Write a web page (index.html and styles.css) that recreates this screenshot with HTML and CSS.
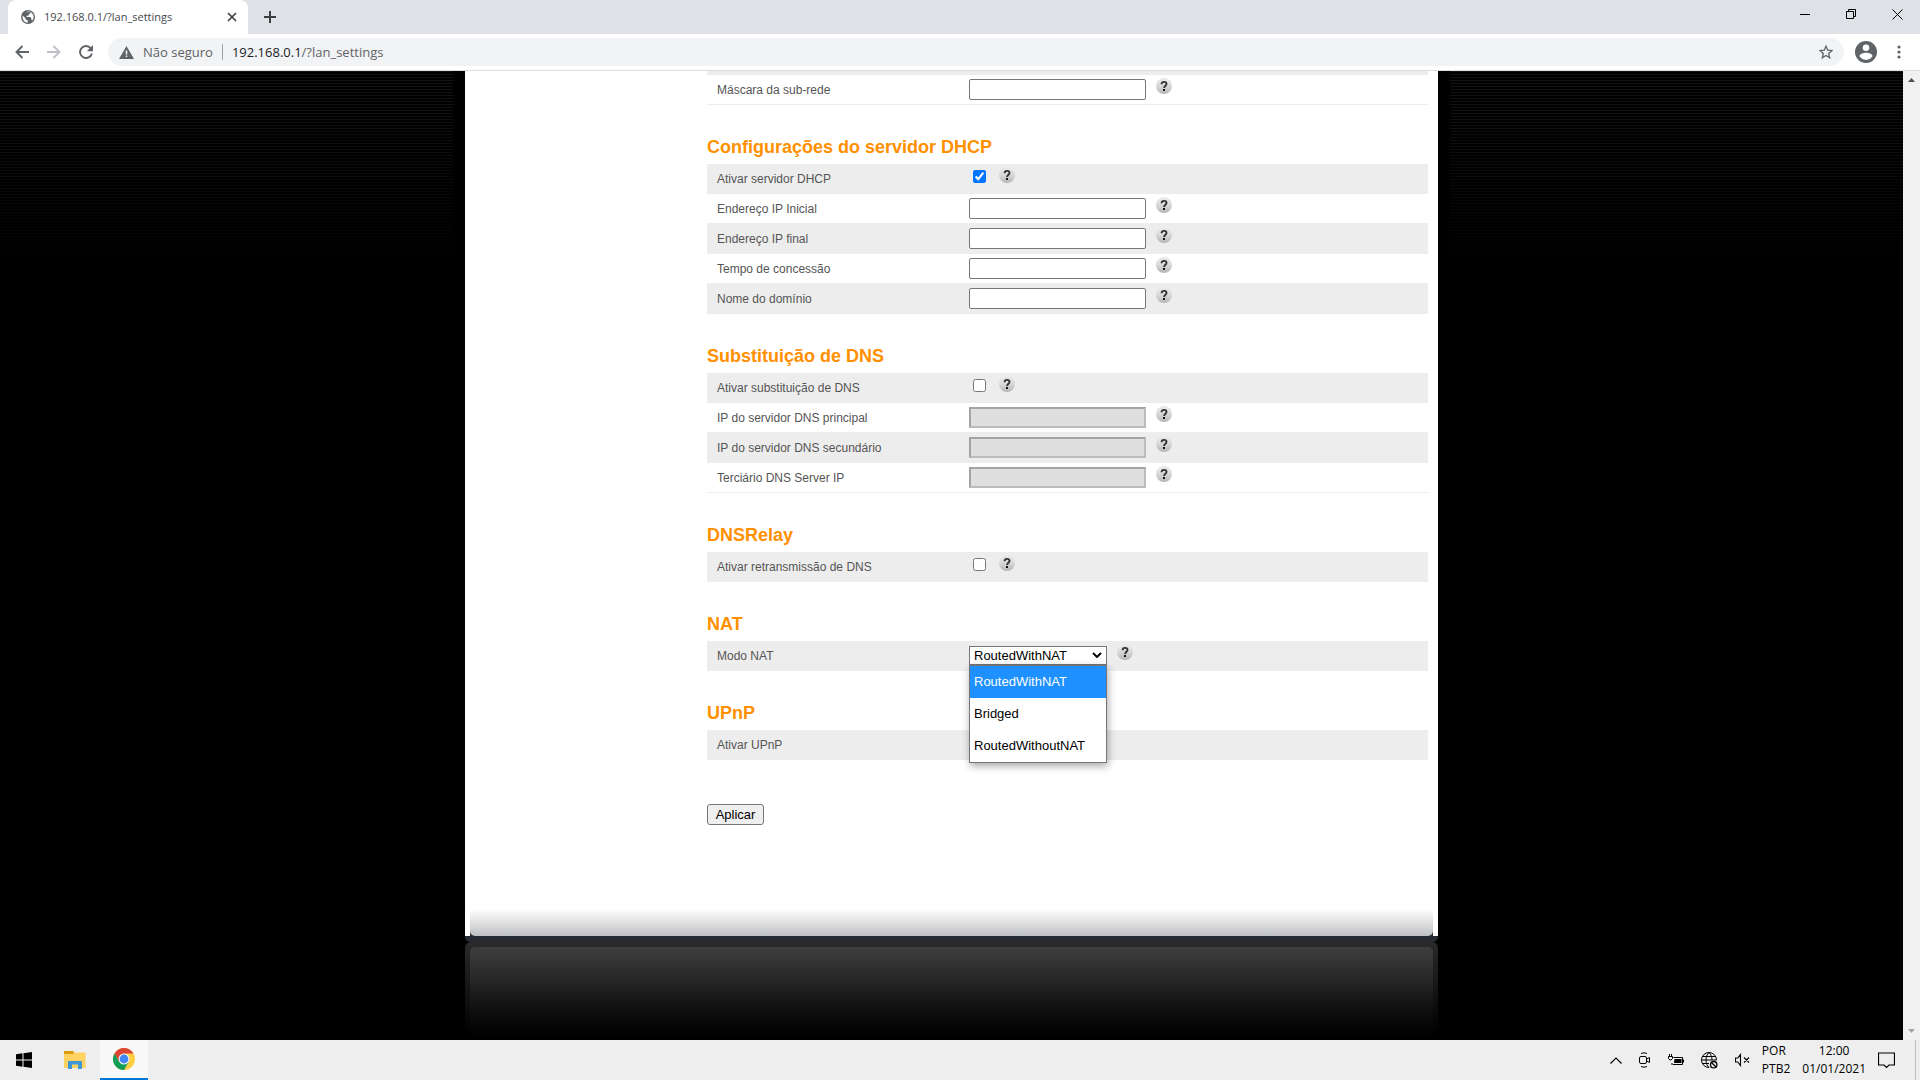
FILE: index.html
```html
<!DOCTYPE html>
<html lang="pt-BR">
<head>
<meta charset="utf-8">
<title>192.168.0.1/?lan_settings</title>
<link rel="stylesheet" href="styles.css">
</head>
<body>
<svg class="defs" aria-hidden="true">
  <defs>
    <linearGradient id="ball" x1="0" y1="0" x2="0" y2="1"><stop offset="0" stop-color="#ececec"/><stop offset=".5" stop-color="#d9d9d9"/><stop offset="1" stop-color="#b4b4b4"/></linearGradient>
    <symbol id="help" viewBox="0 0 16 16"><circle cx="8" cy="8" r="8" fill="url(#ball)"/><path d="M5.600 6.300C5.600 4.700 6.600 3.900 8.100 3.900S10.500 4.700 10.500 5.900C10.500 7.700 8.100 7.700 8.100 10" fill="none" stroke="#333" stroke-width="1.900"/><rect x="7" y="11" width="2" height="2" fill="#111"/></symbol>
  </defs>
</svg>

<header class="tabs">
  <div class="tab">
    <svg class="favicon" viewBox="0 0 14 14"><circle cx="7" cy="7" r="7" fill="#5f6368"/><path d="M1.600 5.500 4.500 8.200v1.200l2.300 1v2.200C3.500 12.700 1 9.500 1.600 5.500ZM5 2.200c1.300-.8 3-.9 4.300-.3v1.600L7.600 4.600v1.200H5.600v1.300h3.700l1 1.200v1.500l1.200.7C13.600 7.500 12.700 4 9.800 2.300L8.500 2Z" fill="#fff"/></svg>
    <span class="tab-title">192.168.0.1/?lan_settings</span>
    <button class="icon-btn" aria-label="Fechar guia"><svg width="10" height="10" viewBox="0 0 10 10"><path d="M1 1l8 8M9 1 1 9" stroke="#3c4043" stroke-width="1.700"/></svg></button>
  </div>
  <button class="icon-btn new-tab" aria-label="Nova guia"><svg width="12" height="12" viewBox="0 0 12 12"><path d="M6 0v12M0 6h12" stroke="#3c4043" stroke-width="2"/></svg></button>
  <div class="window-controls">
    <button class="icon-btn" aria-label="Minimizar"><svg width="10" height="10" viewBox="0 0 10 10"><path d="M0 5.500h10" stroke="#000"/></svg></button>
    <button class="icon-btn" aria-label="Restaurar"><svg width="10" height="10" viewBox="0 0 10 10"><path d="M.5 2.500h7v7h-7ZM2.500 2.500v-2h7v7h-2" fill="none" stroke="#000"/></svg></button>
    <button class="icon-btn" aria-label="Fechar"><svg width="11" height="11" viewBox="0 0 11 11"><path d="M.5.5l10 10M10.500.5l-10 10" stroke="#000"/></svg></button>
  </div>
</header>

<nav class="toolbar">
  <button class="icon-btn nav-btn" aria-label="Voltar"><svg width="14" height="14" viewBox="0 0 14 14"><path d="M14 7H1.500M7.500 1l-6 6 6 6" fill="none" stroke="#5f6368" stroke-width="1.900"/></svg></button>
  <button class="icon-btn nav-btn" aria-label="Avançar"><svg width="14" height="14" viewBox="0 0 14 14"><path d="M0 7h12.500M6.500 1l6 6-6 6" fill="none" stroke="#bdc1c6" stroke-width="1.900"/></svg></button>
  <button class="icon-btn nav-btn" aria-label="Recarregar"><svg width="14" height="14" viewBox="0 0 14 14"><path d="M11.700 3.200A6 6 0 1 0 12.900 8.500" fill="none" stroke="#5f6368" stroke-width="1.900"/><path d="M14 0v6.200H7.800Z" fill="#5f6368"/></svg></button>
  <div class="omnibox">
    <svg width="15" height="13" viewBox="0 0 15 13"><path d="M7.500 0 15 13H0Z" fill="#5f6368"/><path d="M6.700 4.500h1.600v4H6.700ZM6.700 9.500h1.600v1.600H6.700Z" fill="#f1f3f4"/></svg>
    <span class="insecure">Não seguro</span>
    <span class="divider"></span>
    <span class="url">192.168.0.1<span class="path">/?lan_settings</span></span>
    <button class="icon-btn star" aria-label="Favoritar"><svg width="14" height="14" viewBox="0 0 14 14"><path d="M7 1.200 8.700 5.200l4.300.4-3.300 2.900 1 4.300L7 10.500l-3.700 2.300 1-4.300L1 5.600l4.300-.4Z" fill="none" stroke="#5f6368" stroke-width="1.300"/></svg></button>
  </div>
  <button class="icon-btn profile" aria-label="Perfil"><svg width="22" height="22" viewBox="0 0 22 22"><circle cx="11" cy="11" r="11" fill="#5f6368"/><circle cx="11" cy="6.700" r="3.300" fill="#fff"/><path d="M4.500 15.300c0-2.300 3.500-3.500 6.500-3.500s6.500 1.200 6.500 3.500C16 17.600 13.700 18.900 11 18.900S6 17.600 4.500 15.300Z" fill="#fff"/></svg></button>
  <button class="icon-btn menu" aria-label="Menu"><svg width="4" height="14" viewBox="0 0 4 14"><g fill="#5f6368"><circle cx="2" cy="2" r="1.600"/><circle cx="2" cy="7" r="1.600"/><circle cx="2" cy="12" r="1.600"/></g></svg></button>
</nav>

<div class="viewport">
  <main class="page">
    <div class="shell">
      <div class="panel">
        <form class="settings">
          <div class="row sliver"></div>
          <div class="row plain"><label for="mask">Máscara da sub-rede</label><div class="field"><input class="text" id="mask" type="text"><svg class="help"><use href="#help"/></svg></div></div>

          <h2>Configurações do servidor DHCP</h2>
          <div class="row"><label for="dhcp">Ativar servidor DHCP</label><div class="field"><input class="check" id="dhcp" type="checkbox" checked><svg class="help"><use href="#help"/></svg></div></div>
          <div class="row plain"><label for="ip1">Endereço IP Inicial</label><div class="field"><input class="text" id="ip1" type="text"><svg class="help"><use href="#help"/></svg></div></div>
          <div class="row"><label for="ip2">Endereço IP final</label><div class="field"><input class="text" id="ip2" type="text"><svg class="help"><use href="#help"/></svg></div></div>
          <div class="row plain"><label for="lease">Tempo de concessão</label><div class="field"><input class="text" id="lease" type="text"><svg class="help"><use href="#help"/></svg></div></div>
          <div class="row"><label for="domain">Nome do domínio</label><div class="field"><input class="text" id="domain" type="text"><svg class="help"><use href="#help"/></svg></div></div>

          <h2>Substituição de DNS</h2>
          <div class="row"><label for="dns">Ativar substituição de DNS</label><div class="field"><input class="check" id="dns" type="checkbox"><svg class="help"><use href="#help"/></svg></div></div>
          <div class="row plain"><label for="dns1">IP do servidor DNS principal</label><div class="field"><input class="text" id="dns1" type="text" disabled><svg class="help"><use href="#help"/></svg></div></div>
          <div class="row"><label for="dns2">IP do servidor DNS secundário</label><div class="field"><input class="text" id="dns2" type="text" disabled><svg class="help"><use href="#help"/></svg></div></div>
          <div class="row plain"><label for="dns3">Terciário DNS Server IP</label><div class="field"><input class="text" id="dns3" type="text" disabled><svg class="help"><use href="#help"/></svg></div></div>

          <h2>DNSRelay</h2>
          <div class="row"><label for="relay">Ativar retransmissão de DNS</label><div class="field"><input class="check" id="relay" type="checkbox"><svg class="help"><use href="#help"/></svg></div></div>

          <h2>NAT</h2>
          <div class="row"><label for="nat">Modo NAT</label><div class="field">
            <div class="dropdown">
              <select id="nat"><option>RoutedWithNAT</option><option>Bridged</option><option>RoutedWithoutNAT</option></select>
              <svg class="chevron" width="10" height="6" viewBox="0 0 10 6"><path d="M1 1l4 4 4-4" fill="none" stroke="#000" stroke-width="1.900"/></svg>
              <ul class="options"><li class="active">RoutedWithNAT</li><li>Bridged</li><li>RoutedWithoutNAT</li></ul>
            </div>
            <svg class="help"><use href="#help"/></svg></div></div>

          <h2>UPnP</h2>
          <div class="row"><label for="upnp">Ativar UPnP</label><div class="field"><input class="check" id="upnp" type="checkbox"></div></div>

          <button class="apply" type="button">Aplicar</button>
        </form>
        <div class="panel-foot"><div class="shade"></div></div>
      </div>
      <div class="base"></div>
      <div class="reflection"><div class="glow"></div></div>
    </div>
  </main>
  <div class="scrollbar">
    <svg width="7" height="4" viewBox="0 0 7 4"><path d="M0 4 3.500 0 7 4Z" fill="#505050"/></svg>
    <svg width="7" height="4" viewBox="0 0 7 4"><path d="M0 0h7L3.500 4Z" fill="#a3a3a3"/></svg>
  </div>
</div>

<footer class="taskbar">
  <button class="icon-btn task" aria-label="Iniciar"><svg width="16" height="16" viewBox="0 0 16 16"><path d="M0 2.200 6.500 1.300V7.500H0ZM7.500 1.200 16 0v7.500H7.500ZM0 8.500h6.500v6.200L0 13.800ZM7.500 8.500H16V16L7.500 14.800Z"/></svg></button>
  <button class="icon-btn task explorer" aria-label="Explorador de Arquivos"><svg width="22" height="18" viewBox="0 0 22 18"><path d="M0 0h9l1 1.500h11.500V17H0Z" fill="#ffd262"/><path d="M0 0h9.500v3H0Z" fill="#dd9b0e"/><path d="M4 10h14v8h-4v-4.500H8V18H4Z" fill="#3f97d6"/></svg></button>
  <button class="icon-btn task current" aria-label="Google Chrome"><svg width="24" height="24" viewBox="0 0 24 24"><circle cx="12" cy="12" r="11" fill="#ffcd40"/><path d="M2.470 6.500A11 11 0 0 1 21.500 6.500H12L7.200 14.800Z" fill="#db4437"/><path d="M2.470 6.500A11 11 0 0 0 12 23L16.800 14.800 7.200 14.800Z" fill="#0f9d58"/><circle cx="12" cy="12" r="5.500" fill="#f1f1f1"/><circle cx="12" cy="12" r="4.400" fill="#4285f4"/></svg></button>
  <div class="tray">
    <div class="tray-icons">
      <svg width="12" height="7" viewBox="0 0 12 7"><path d="M.5 6.500 6 1l5.500 5.500" fill="none" stroke="#000" stroke-width="1.200"/></svg>
      <svg width="12" height="16" viewBox="0 0 12 16"><g fill="none" stroke="#000"><path d="M2 1.500Q5 0 8 1.500M2 14.500Q5 16 8 14.500"/><rect x=".5" y="4.500" width="7" height="7" rx="1.500"/><path d="M7.500 7.200l3-1.700v5l-3-1.700"/></g></svg>
      <svg width="16" height="12" viewBox="0 0 16 12"><path d="M5.500 3.500h9v7h-9.500" fill="none" stroke="#000"/><path d="M6.500 5H13.500v4H6ZM15 5.500h1v3h-1ZM1 0h1v2H1ZM3 0h1v2H3ZM2 6h1v4.500h2v-1H3V6Z"/><path d="M.5 2.500h4v2L3 6H2L.5 4.500Z" fill="none" stroke="#000"/></svg>
      <svg width="17" height="17" viewBox="0 0 17 17"><g fill="none" stroke="#000"><path d="M15.500 8A7.500 7.500 0 1 0 8 15.500M.5 8h15M1.800 4.500h12.400M1.800 11.500h6.200M8 .5C4 4 4 12 8 15.500M8 .5c2 2 3 4.500 3 7.500"/><circle cx="12.700" cy="12.700" r="3.200" stroke-width="1.300"/><path d="M10.500 10.500l4.500 4.500" stroke-width="1.300"/></g></svg>
      <svg width="15" height="14" viewBox="0 0 15 14"><path d="M.5 5v4h2.300L5.500 12.500v-11L2.800 5ZM9 4.500l5 5M14 4.500l-5 5" fill="none" stroke="#000" stroke-width="1.100"/></svg>
    </div>
    <div class="lang"><span>POR</span><span>PTB2</span></div>
    <div class="clock"><span>12:00</span><span>01/01/2021</span></div>
    <svg width="17" height="17" viewBox="0 0 17 17"><path d="M.5 1h16v12h-5.500l-2.500 2.500L6 13H.5Z" fill="none" stroke="#000" stroke-width="1.200"/></svg>
  </div>
  <button class="show-desktop" aria-label="Mostrar área de trabalho"></button>
</footer>
</body>
</html>
```

FILE: styles.css
```css
* { box-sizing: border-box; }

body {
  margin: 0;
  height: 100vh;
  display: flex;
  flex-direction: column;
  background: #000;
  font-family: "Open Sans", "Noto Sans", sans-serif;
  overflow: hidden;
}

svg { display: block; flex: none; }
.defs { position: absolute; width: 0; height: 0; }

.icon-btn {
  display: flex;
  align-items: center;
  justify-content: center;
  padding: 0;
  border: 0;
  background: none;
  flex: none;
}

/* Tab strip */
.tabs {
  flex: none;
  display: flex;
  align-items: center;
  height: 34px;
  padding-left: 8px;
  background: #dee1e6;
}
.tab {
  display: flex;
  align-items: center;
  gap: 9px;
  width: 240px;
  height: 34px;
  padding: 0 11px 0 13px;
  border-radius: 8px 8px 0 0;
  background: #fff;
}
.favicon { width: 14px; height: 14px; }
.tab-title { flex: 1; font-size: 11px; line-height: 16px; color: #45494d; }
.new-tab { width: 44px; }
.window-controls { display: flex; margin-left: auto; padding-bottom: 6px; }
.window-controls .icon-btn { width: 46px; height: 28px; }

/* Address bar */
.toolbar {
  flex: none;
  display: flex;
  align-items: center;
  height: 37px;
  padding-left: 6px;
  border-bottom: 1px solid #dadce0;
  background: #fff;
}
.nav-btn { width: 32px; height: 28px; }
.omnibox {
  flex: 1;
  display: flex;
  align-items: center;
  height: 28px;
  margin-left: 6px;
  padding: 0 11px;
  border-radius: 14px;
  background: #f1f3f4;
  font-size: 13px;
  line-height: 18px;
  color: #5f6368;
}
.insecure { margin-left: 9px; }
.divider { width: 1px; height: 16px; margin: 0 9px; background: #9aa0a6; }
.url { color: #202124; }
.path { color: #5f6368; }
.star { margin-left: auto; }
.profile { margin-left: 11px; }
.menu { width: 43px; }

/* Document area */
.viewport { flex: 1; min-height: 0; display: flex; }
.page {
  flex: 1;
  overflow: hidden;
  background:
    linear-gradient(rgba(0, 0, 0, 0), #000 200px),
    repeating-linear-gradient(#141414 0 1px, #000 1px 3px);
}
.shell { width: 997px; margin: 0 auto; padding: 0 12px; background: #000; }
.panel { background: #fff; }
.settings {
  display: flex;
  flex-direction: column;
  padding: 0 10px 84px 242px;
  font-family: "Liberation Sans", Arial, sans-serif;
}
.row {
  display: flex;
  align-items: center;
  height: 30px;
  padding-left: 10px;
  border-bottom: 1px solid #ededed;
  background: #ededed;
  font-size: 12px;
  line-height: 16px;
  color: #555;
}
.row.plain { background: #fff; }
.row.sliver { height: 4px; }
.row label { width: 252px; }
.field { display: flex; align-items: flex-start; gap: 10px; height: 23px; }
h2 {
  margin: 0;
  padding: 31px 0 6px;
  font-size: 18px;
  line-height: 22px;
  font-weight: bold;
  color: #ff9000;
}
.help { width: 16px; height: 16px; }
.text {
  width: 177px;
  height: 21px;
  margin-top: 1px;
  border: 1px solid #767676;
  border-radius: 2px;
  background: #fff;
}
.text:disabled {
  border: 2px solid;
  border-color: #a3a3a3 #bcbcbc #bcbcbc #a3a3a3;
  border-radius: 0;
  background: #dfdfdf;
}
.check { width: 13px; height: 13px; margin: 3px 3px 0 4px; accent-color: #0075ff; }

.dropdown { position: relative; margin-top: 2px; }
.dropdown select {
  display: block;
  width: 138px;
  height: 19px;
  padding: 0 4px;
  appearance: none;
  border: 1px solid #767676;
  border-radius: 0;
  background: #fff;
  font-family: inherit;
  font-size: 13px;
  color: #000;
}
.chevron { position: absolute; right: 5px; top: 6px; }
.options {
  position: absolute;
  z-index: 1;
  top: 19px;
  left: 0;
  width: 138px;
  margin: 0;
  padding: 0;
  border: 1px solid #767676;
  background: #fff;
  box-shadow: 1px 3px 8px rgba(0, 0, 0, .35);
  list-style: none;
  font-size: 13px;
  line-height: 32px;
  color: #000;
}
.options li { padding-left: 4px; }
.options .active { background: #1e90ff; color: #fff; }

.apply {
  align-self: flex-start;
  margin-top: 44px;
  width: 57px;
  height: 21px;
  padding: 0;
  border: 1px solid #767676;
  border-radius: 3px;
  background: #efefef;
  font-family: inherit;
  font-size: 13px;
  color: #000;
}

/* Rounded foot of the panel and its mirror image below */
.panel-foot {
  padding: 0 5px;
  background:
    linear-gradient(#fff, #fff) left / 5px 100% no-repeat,
    linear-gradient(#fff, #fff) right / 5px 100% no-repeat,
    #262a32;
}
.shade {
  height: 27px;
  border-radius: 0 0 5px 5px;
  background: linear-gradient(#fff, #bfc0c2);
}
.base { height: 6px; border-radius: 0 0 5px 5px; background: #262a32; }
.reflection {
  height: 98px;
  padding: 5px 5px 0;
  border-radius: 6px 6px 0 0;
  background: linear-gradient(#2a2a2a, #000 92px);
}
.glow {
  height: 93px;
  border-radius: 5px 5px 0 0;
  background: linear-gradient(#3e3e3e, #333 16px, #111 60px, #000 90px);
}

.scrollbar {
  flex: none;
  display: flex;
  flex-direction: column;
  align-items: center;
  justify-content: space-between;
  width: 17px;
  padding: 7px 0;
  background: #f1f1f1;
}

/* Taskbar */
.taskbar {
  flex: none;
  display: flex;
  height: 40px;
  background: #eee;
  font-size: 12px;
  line-height: 18px;
  color: #000;
}
.task { width: 48px; }
.task.explorer { width: 52px; padding-left: 2px; }
.task.current { border-bottom: 2px solid #0078d7; background: #f9f9f9; }
.tray { display: flex; align-items: center; gap: 12px; margin-left: auto; padding-right: 20px; }
.tray-icons { display: flex; align-items: center; gap: 17px; }
.lang, .clock { display: flex; flex-direction: column; }
.clock { align-items: center; }
.show-desktop { width: 5px; padding: 0; border: 0; border-left: 1px solid #c0c0c0; background: none; }
```
